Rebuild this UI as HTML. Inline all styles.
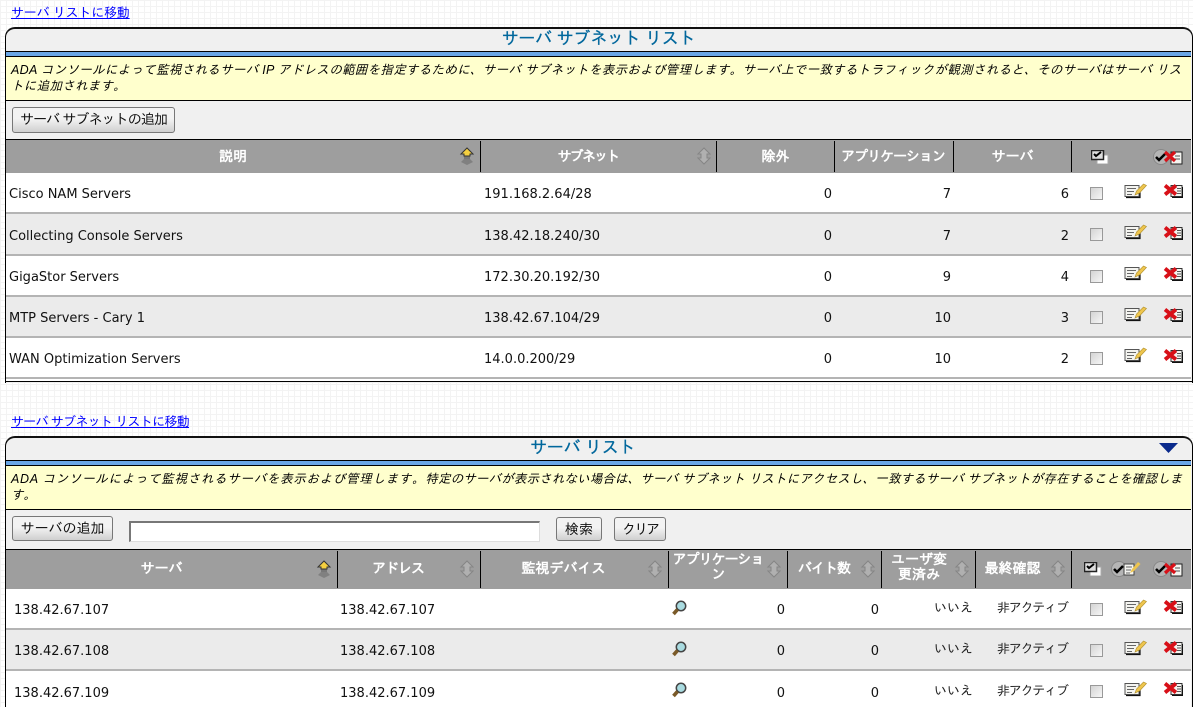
<!DOCTYPE html>
<html lang="ja"><head><meta charset="utf-8"><title>サーバ サブネット リスト</title>
<style>
html,body{margin:0;padding:0;height:707px;overflow:hidden}
html{width:1193px}
body{width:1193px;position:relative;background-color:#fff;
background-image:linear-gradient(#f3f3f3 1px,transparent 1px),linear-gradient(90deg,#f3f3f3 1px,transparent 1px);background-size:6px 6px;
font:13px "DejaVu Sans","WenQuanYi Zen Hei",sans-serif;color:#000}
div,a,svg{position:absolute;white-space:nowrap}
a{color:#00f;text-decoration:underline;font:13px "Liberation Sans","IPAGothic",sans-serif}
.b{background:#000}
.panel{left:5px;width:1186px;border:1px solid #000;border-top:2px solid #111;border-radius:10px 10px 0 0;background:#f0f0f0;overflow:hidden;border-bottom:none}
.t{color:#00679c;font:17px "Liberation Sans","IPAGothic",sans-serif;text-align:center;-webkit-text-stroke:.25px #00679c;letter-spacing:-.2px}
.blue{left:6px;width:1185px;height:4px;background:#6aa6e6;border-top:1.5px solid #000;border-bottom:1px solid #000}
.y{left:6px;width:1185px;background:#ffffcd;border-bottom:1px solid #000}
.yt{left:11px;font:italic 12.5px/16px "Liberation Sans","IPAGothic",sans-serif;letter-spacing:.3px;width:1178px;white-space:nowrap}
.btn{box-sizing:border-box;border:1px solid #777;border-radius:3px;background:linear-gradient(#f3f3f3 45%,#cfcfcf);font:14px/22px "Liberation Sans","IPAGothic",sans-serif;text-align:center;color:#111}
.hd{left:6px;width:1185px;background:#9e9e9e}
.h{color:#fff;font:bold 14px/16px "WenQuanYi Zen Hei","IPAGothic",sans-serif;text-align:center}
.sep{width:1px;background:#000}
.row{left:6px;width:1185px;border-bottom:2px solid #b4b4b4}
.w{background:#fff}.g{background:#ebebeb}
.c{color:#111}
.r{text-align:right;width:60px}
.j{font:13px "Liberation Sans","IPAGothic",sans-serif;color:#222}
.cb{width:11px;height:11px;border:1px solid #999;background:linear-gradient(135deg,#d4d4d4,#f6f6f6)}
</style></head><body>
<svg width="0" height="0" style="left:0;top:0"><defs>
<symbol id="up" viewBox="0 0 16 18"><path d="M8 9 2 15l6 3 6-3z" fill="#808080"/><path d="M5 9h6v3H5z" fill="#777"/><path d="M8 1 2 7h3v2h6V7h3z" fill="#f5d040" stroke="#333"/></symbol>
<symbol id="sort" viewBox="0 0 16 18"><path d="M8 1 2 7h3v4H2l6 6 6-6h-3V7h3z" fill="#b0b0b0" stroke="#858585"/></symbol>
<symbol id="edit" viewBox="0 0 23 16"><path d="M1 2.500h14v11H1z" fill="#f4f4f0" stroke="#555"/><path d="M2 14.500h14V8" stroke="#111" stroke-width="1.200" fill="none"/><path d="M3 5.500h9M3 8.500h7M3 11.500h5" stroke="#666"/><path d="M11 12l1.500-4 7-7 3 1.500-7 7.500z" fill="#eec54e" stroke="#b0902c" stroke-width=".6"/></symbol>
<symbol id="del" viewBox="0 0 20 16"><path d="M8 2.500h11v11H8z" fill="#f4f4f0" stroke="#333"/><path d="M9 14.500h10.500V4" stroke="#111" fill="none"/><path d="M14 5.500h4M14 8h4M14 10.500h4" stroke="#555"/><path d="M2 2.500l11 9M13 2.500l-11 9" stroke="#d81018" stroke-width="3.800"/></symbol>
<symbol id="ck" viewBox="0 0 18 14"><path d="M6 5h11v9H6z" fill="#fff" stroke="#aaa"/><path d="M.5.500h12v9H.5z" fill="#ddd" stroke="#222" stroke-width="1.500"/><path d="M3 4l2 2 5-4" stroke="#000" stroke-width="2" fill="none"/></symbol>
<symbol id="ckd" viewBox="0 0 30 16"><circle cx="8" cy="8" r="7.500" fill="#b5b5b5" stroke="#888"/><path d="M3 8l3 3 6-6" stroke="#000" stroke-width="2.500" fill="none"/><path d="M18 3h11v12H18z" fill="#f4f4f0" stroke="#222"/><path d="M22 7h5M22 10h5" stroke="#555"/><path d="M12 3l10 9M22 3 12 12" stroke="#d81018" stroke-width="3.200"/></symbol>
<symbol id="cke" viewBox="0 0 30 16"><circle cx="8" cy="8" r="7.500" fill="#b5b5b5" stroke="#888"/><path d="M3 8l3 3 6-6" stroke="#000" stroke-width="2.500" fill="none"/><path d="M13 3h10v11H13z" fill="#f4f4f0" stroke="#444"/><path d="M15 6h6M15 9h5M15 12h4" stroke="#666"/><path d="M19 12l2-4 6-7 2.500 2-6.500 7z" fill="#eec54e"/></symbol>
<symbol id="mag" viewBox="0 0 16 16"><circle cx="10" cy="6" r="4.700" fill="#a9dbe0" stroke="#444" stroke-width="1.500"/><path d="M6.500 9.500 2.500 14" stroke="#7a5a28" stroke-width="3.600"/></symbol>
</defs></svg>

<a href="#" style="left:11px;top:5px;letter-spacing:-.2px">サーバ リストに移動</a>

<!-- Panel 1 -->
<div class="panel" style="top:27px;height:354px"></div>
<div class="t" style="left:6px;width:1185px;top:28px;line-height:22px">サーバ サブネット リスト</div>
<div class="blue" style="top:51px"></div>
<div class="y" style="top:57px;height:43px"></div>
<div class="yt" style="top:62px">ADA コンソールによって監視されるサーバ IP アドレスの範囲を指定するために、サーバ サブネットを表示および管理します。サーバ上で一致するトラフィックが観測されると、そのサーバはサーバ リス<br>トに追加されます。</div>
<div class="btn" style="left:12px;top:107px;width:163px;height:26px;letter-spacing:-.9px">サーバ サブネットの追加</div>
<div class="b" style="left:6px;top:139px;width:1185px;height:1px"></div>
<div class="hd" style="top:140px;height:33px"></div>
<div class="h" style="left:6px;width:454px;top:148px">説明</div><svg style="left:459px;top:147px" width="16" height="18"><use href="#up"/></svg>
<div class="sep" style="left:480px;top:141px;height:31px"></div>
<div class="h" style="left:481px;width:214px;top:148px;letter-spacing:-1.800px">サブネット</div><svg style="left:696px;top:147px" width="16" height="18"><use href="#sort"/></svg>
<div class="sep" style="left:716px;top:141px;height:31px"></div>
<div class="h" style="left:717px;width:117px;top:148px">除外</div>
<div class="sep" style="left:834px;top:141px;height:31px"></div>
<div class="h" style="left:834px;width:118px;top:148px;letter-spacing:-1px">アプリケーション</div>
<div class="sep" style="left:953px;top:141px;height:31px"></div>
<div class="h" style="left:954px;width:117px;top:148px">サーバ</div>
<div class="sep" style="left:1071px;top:141px;height:31px"></div>
<svg style="left:1091px;top:150px" width="18" height="14"><use href="#ck"/></svg>
<svg style="left:1153px;top:149px" width="30" height="16"><use href="#ckd"/></svg>

<div class="row w" style="top:173px;height:39px"></div>
<div class="row g" style="top:214px;height:40px"></div>
<div class="row w" style="top:256px;height:39px"></div>
<div class="row g" style="top:297px;height:39px"></div>
<div class="row w" style="top:338px;height:39px"></div>
<div class="w" style="left:6px;top:379px;width:1185px;height:2px"></div>
<div class="b" style="left:5px;top:381px;width:1187px;height:1px"></div>

<div class="c" style="left:9px;top:187px">Cisco NAM Servers</div><div class="c" style="left:484px;top:187px">191.168.2.64/28</div><div class="c r" style="left:772px;top:187px">0</div><div class="c r" style="left:891px;top:187px">7</div><div class="c r" style="left:1009px;top:187px">6</div>
<div class="c" style="left:9px;top:229px">Collecting Console Servers</div><div class="c" style="left:484px;top:229px">138.42.18.240/30</div><div class="c r" style="left:772px;top:229px">0</div><div class="c r" style="left:891px;top:229px">7</div><div class="c r" style="left:1009px;top:229px">2</div>
<div class="c" style="left:9px;top:270px">GigaStor Servers</div><div class="c" style="left:484px;top:270px">172.30.20.192/30</div><div class="c r" style="left:772px;top:270px">0</div><div class="c r" style="left:891px;top:270px">9</div><div class="c r" style="left:1009px;top:270px">4</div>
<div class="c" style="left:9px;top:311px">MTP Servers - Cary 1</div><div class="c" style="left:484px;top:311px">138.42.67.104/29</div><div class="c r" style="left:772px;top:311px">0</div><div class="c r" style="left:891px;top:311px">10</div><div class="c r" style="left:1009px;top:311px">3</div>
<div class="c" style="left:9px;top:352px">WAN Optimization Servers</div><div class="c" style="left:484px;top:352px">14.0.0.200/29</div><div class="c r" style="left:772px;top:352px">0</div><div class="c r" style="left:891px;top:352px">10</div><div class="c r" style="left:1009px;top:352px">2</div>

<div class="cb" style="left:1090px;top:187px"></div><svg style="left:1124px;top:183px" width="23" height="16"><use href="#edit"/></svg><svg style="left:1163px;top:183px" width="20" height="16"><use href="#del"/></svg>
<div class="cb" style="left:1090px;top:228px"></div><svg style="left:1124px;top:224px" width="23" height="16"><use href="#edit"/></svg><svg style="left:1163px;top:225px" width="20" height="16"><use href="#del"/></svg>
<div class="cb" style="left:1090px;top:270px"></div><svg style="left:1124px;top:265px" width="23" height="16"><use href="#edit"/></svg><svg style="left:1163px;top:266px" width="20" height="16"><use href="#del"/></svg>
<div class="cb" style="left:1090px;top:311px"></div><svg style="left:1124px;top:306px" width="23" height="16"><use href="#edit"/></svg><svg style="left:1163px;top:307px" width="20" height="16"><use href="#del"/></svg>
<div class="cb" style="left:1090px;top:352px"></div><svg style="left:1124px;top:347px" width="23" height="16"><use href="#edit"/></svg><svg style="left:1163px;top:348px" width="20" height="16"><use href="#del"/></svg>

<a href="#" style="left:11px;top:414px;letter-spacing:-.7px">サーバ サブネット リストに移動</a>

<!-- Panel 2 -->
<div class="panel" style="top:436px;height:271px"></div>
<div class="t" style="left:530px;top:437px;line-height:22px">サーバ リスト</div>
<svg style="left:1159px;top:443px" width="20" height="11"><path d="M0 0h19l-9.500 10z" fill="#0a2a8c"/></svg>
<div class="blue" style="top:460px"></div>
<div class="y" style="top:466px;height:43px"></div>
<div class="yt" style="top:471px"><span style="letter-spacing:.7px">ADA コンソールによって監視されるサーバを表示および管理します。</span><span style="letter-spacing:.15px">特定のサーバが表示されない場合は、サーバ サブネット リストにアクセスし、一致するサーバ サブネットが存在することを確認しま<br>す。</span></div>
<div class="btn" style="left:12px;top:516px;width:101px;height:25px">サーバの追加</div>
<div style="left:129px;top:521px;width:408px;height:18px;background:#fff;border:2px solid #777;border-right:1px solid #ddd;border-bottom:1px solid #ddd"></div>
<div class="btn" style="left:556px;top:517px;width:46px;height:24px">検索</div>
<div class="btn" style="left:614px;top:517px;width:52px;height:24px;letter-spacing:-2px">クリア</div>
<div class="b" style="left:6px;top:549px;width:1185px;height:1px"></div>
<div class="hd" style="top:550px;height:39px"></div>
<div class="h" style="left:6px;width:311px;top:560px">サーバ</div><svg style="left:316px;top:560px" width="16" height="18"><use href="#up"/></svg>
<div class="sep" style="left:337px;top:551px;height:37px"></div>
<div class="h" style="left:338px;width:120px;top:560px;letter-spacing:-1px">アドレス</div><svg style="left:459px;top:560px" width="16" height="18"><use href="#sort"/></svg>
<div class="sep" style="left:480px;top:551px;height:37px"></div>
<div class="h" style="left:481px;width:165px;top:560px">監視デバイス</div><svg style="left:647px;top:560px" width="16" height="18"><use href="#sort"/></svg>
<div class="sep" style="left:668px;top:551px;height:37px"></div>
<div class="h" style="left:670px;width:96px;top:552px;line-height:15px;letter-spacing:-1px">アプリケーショ<br>ン</div><svg style="left:766px;top:560px" width="16" height="18"><use href="#sort"/></svg>
<div class="sep" style="left:787px;top:551px;height:37px"></div>
<div class="h" style="left:788px;width:72px;top:560px;letter-spacing:-1px">バイト数</div><svg style="left:860px;top:560px" width="16" height="18"><use href="#sort"/></svg>
<div class="sep" style="left:881px;top:551px;height:37px"></div>
<div class="h" style="left:884px;width:70px;top:552px;line-height:15px">ユーザ変<br>更済み</div><svg style="left:954px;top:560px" width="16" height="18"><use href="#sort"/></svg>
<div class="sep" style="left:975px;top:551px;height:37px"></div>
<div class="h" style="left:976px;width:73px;top:560px">最終確認</div><svg style="left:1050px;top:560px" width="16" height="18"><use href="#sort"/></svg>
<div class="sep" style="left:1071px;top:551px;height:37px"></div>
<svg style="left:1084px;top:562px" width="18" height="14"><use href="#ck"/></svg>
<svg style="left:1111px;top:561px" width="30" height="16"><use href="#cke"/></svg>
<svg style="left:1153px;top:561px" width="30" height="16"><use href="#ckd"/></svg>

<div class="row w" style="top:589px;height:39px"></div>
<div class="row g" style="top:630px;height:39px"></div>
<div class="row w" style="top:671px;height:36px;border-bottom:none"></div>

<div class="c" style="left:14px;top:603px">138.42.67.107</div><div class="c" style="left:340px;top:603px">138.42.67.107</div>
<svg style="left:671px;top:600px" width="16" height="16"><use href="#mag"/></svg>
<div class="c r" style="left:725px;top:603px">0</div><div class="c r" style="left:819px;top:603px">0</div>
<div class="j" style="left:934px;top:600px">いいえ</div><div class="j" style="left:997px;top:600px;letter-spacing:-1.200px">非アクティブ</div>
<div class="cb" style="left:1090px;top:603px"></div><svg style="left:1124px;top:599px" width="23" height="16"><use href="#edit"/></svg><svg style="left:1163px;top:599px" width="20" height="16"><use href="#del"/></svg>

<div class="c" style="left:14px;top:644px">138.42.67.108</div><div class="c" style="left:340px;top:644px">138.42.67.108</div>
<svg style="left:671px;top:641px" width="16" height="16"><use href="#mag"/></svg>
<div class="c r" style="left:725px;top:644px">0</div><div class="c r" style="left:819px;top:644px">0</div>
<div class="j" style="left:934px;top:641px">いいえ</div><div class="j" style="left:997px;top:641px;letter-spacing:-1.200px">非アクティブ</div>
<div class="cb" style="left:1090px;top:644px"></div><svg style="left:1124px;top:640px" width="23" height="16"><use href="#edit"/></svg><svg style="left:1163px;top:640px" width="20" height="16"><use href="#del"/></svg>

<div class="c" style="left:14px;top:686px">138.42.67.109</div><div class="c" style="left:340px;top:686px">138.42.67.109</div>
<svg style="left:671px;top:682px" width="16" height="16"><use href="#mag"/></svg>
<div class="c r" style="left:725px;top:686px">0</div><div class="c r" style="left:819px;top:686px">0</div>
<div class="j" style="left:934px;top:683px">いいえ</div><div class="j" style="left:997px;top:683px;letter-spacing:-1.200px">非アクティブ</div>
<div class="cb" style="left:1090px;top:685px"></div><svg style="left:1124px;top:681px" width="23" height="16"><use href="#edit"/></svg><svg style="left:1163px;top:681px" width="20" height="16"><use href="#del"/></svg>
</body></html>
